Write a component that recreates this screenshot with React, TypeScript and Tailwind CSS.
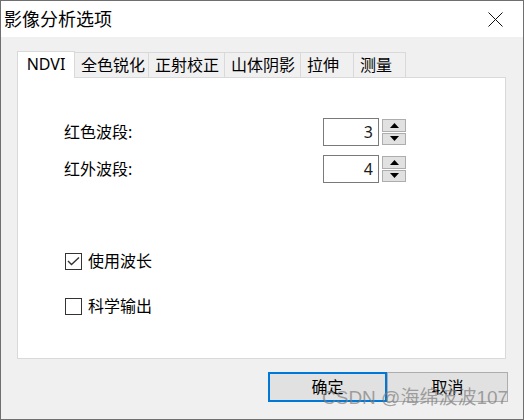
import type { ReactNode } from "react";

const CJK = "font-['Segoe_UI','Noto_Sans','Noto_Sans_CJK_SC',sans-serif]";

const tabs = [
	{ label: "NDVI", w: "w-[58px]" },
	{ label: "全色锐化", w: "w-[75px]" },
	{ label: "正射校正", w: "w-[77px]" },
	{ label: "山体阴影", w: "w-[77px]" },
	{ label: "拉伸", w: "w-[54px]" },
	{ label: "测量", w: "w-[53px]" },
];

function Triangle({ up }: { up?: boolean }) {
	return (
		<svg width="9" height="5" viewBox="0 0 9 5" aria-hidden="true">
			<path d={up ? "M0 5 L4.5 0 L9 5 Z" : "M0 0 L4.5 5 L9 0 Z"} fill="#000" />
		</svg>
	);
}

function SpinRow({ label, value }: { label: string; value: number }) {
	return (
		<div className="flex items-center">
			<span className="w-[259px] text-[16px] leading-none">{label}</span>
			<div className="flex h-[28px] w-[56px] items-center justify-end border border-[#7a7a7a] bg-white pr-[5px] text-[16px] text-[#1a1a1a]">
				{value}
			</div>
			<div className="ml-[3px] flex h-[28px] w-[24px] flex-col gap-px py-px">
				<div className="flex h-[13px] items-center justify-center border border-[#adadad] bg-[#e1e1e1]">
					<Triangle up />
				</div>
				<div className="flex h-[13px] items-center justify-center border border-[#adadad] bg-[#e1e1e1]">
					<Triangle />
				</div>
			</div>
		</div>
	);
}

function Check({ checked, children }: { checked?: boolean; children: ReactNode }) {
	return (
		<div className="flex h-[22px] items-center">
			<div className="ml-px flex size-[17px] items-center justify-center border border-[#333] bg-white">
				{checked && (
					<svg width="13" height="10" viewBox="0 0 13 10" aria-hidden="true">
						<path d="M1 5 L4.5 8.5 L12 1.5" fill="none" stroke="#333" strokeWidth="1.4" />
					</svg>
				)}
			</div>
			<span className="ml-[6px] text-[16px] leading-none">{children}</span>
		</div>
	);
}

export default function App() {
	return (
		<div
			className={`relative flex h-[420px] w-[524px] flex-col border border-[#6f6f6f] text-black ${CJK}`}
		>
			{/* title bar */}
			<div className="flex h-[36px] shrink-0 items-center justify-between bg-white pl-[3px] pr-[20px]">
				<span className="text-[18px] leading-none">影像分析选项</span>
				<svg width="15" height="15" viewBox="0 0 15 15" aria-hidden="true">
					<path d="M0.5 0.5 L14.5 14.5 M14.5 0.5 L0.5 14.5" stroke="#111" strokeWidth="1" />
				</svg>
			</div>

			<div className="flex flex-1 flex-col bg-[#f0f0f0] pl-[16px] pt-[14px]">
				{/* tabs */}
				<div className="flex h-[26px] items-end">
					{tabs.map((t, i) =>
						i === 0 ? (
							<div
								key={t.label}
								className={`relative z-10 -mb-px flex h-[27px] ${t.w} items-center justify-center border-x border-t border-[#d9d9d9] bg-white pb-[2px] text-[16px] leading-none`}
							>
								{t.label}
							</div>
						) : (
							<div
								key={t.label}
								className={`-ml-px flex h-[25px] ${t.w} items-center border-x border-t border-[#d9d9d9] bg-[#f0f0f0] pl-[6px] text-[16px] leading-none`}
							>
								{t.label}
							</div>
						),
					)}
				</div>

				{/* panel */}
				<div className="h-[282px] w-[489px] border border-[#d9d9d9] bg-white pl-[46px] pt-[40px]">
					<div className="flex flex-col gap-[9px]">
						<SpinRow label="红色波段:" value={3} />
						<SpinRow label="红外波段:" value={4} />
					</div>
					<div className="mt-[67px] flex flex-col gap-[23px]">
						<Check checked>使用波长</Check>
						<Check>科学输出</Check>
					</div>
				</div>

				{/* buttons */}
				<div className="ml-[251px] mt-[13px] flex">
					<button
						type="button"
						className="h-[30px] w-[119px] border-2 border-[#0078d7] bg-[#e1e1e1] text-[16px] leading-none"
					>
						确定
					</button>
					<button
						type="button"
						className="h-[30px] w-[121px] border border-[#adadad] bg-[#e1e1e1] text-[16px] leading-none"
					>
						取消
					</button>
				</div>
			</div>

			{/* watermark */}
			<span className="pointer-events-none absolute left-[321px] top-[387px] font-['Liberation_Sans','Noto_Sans_CJK_SC',sans-serif] text-[19px] leading-none text-[#7d7d7d]/70">
				CSDN @海绵波波107
			</span>
		</div>
	);
}
